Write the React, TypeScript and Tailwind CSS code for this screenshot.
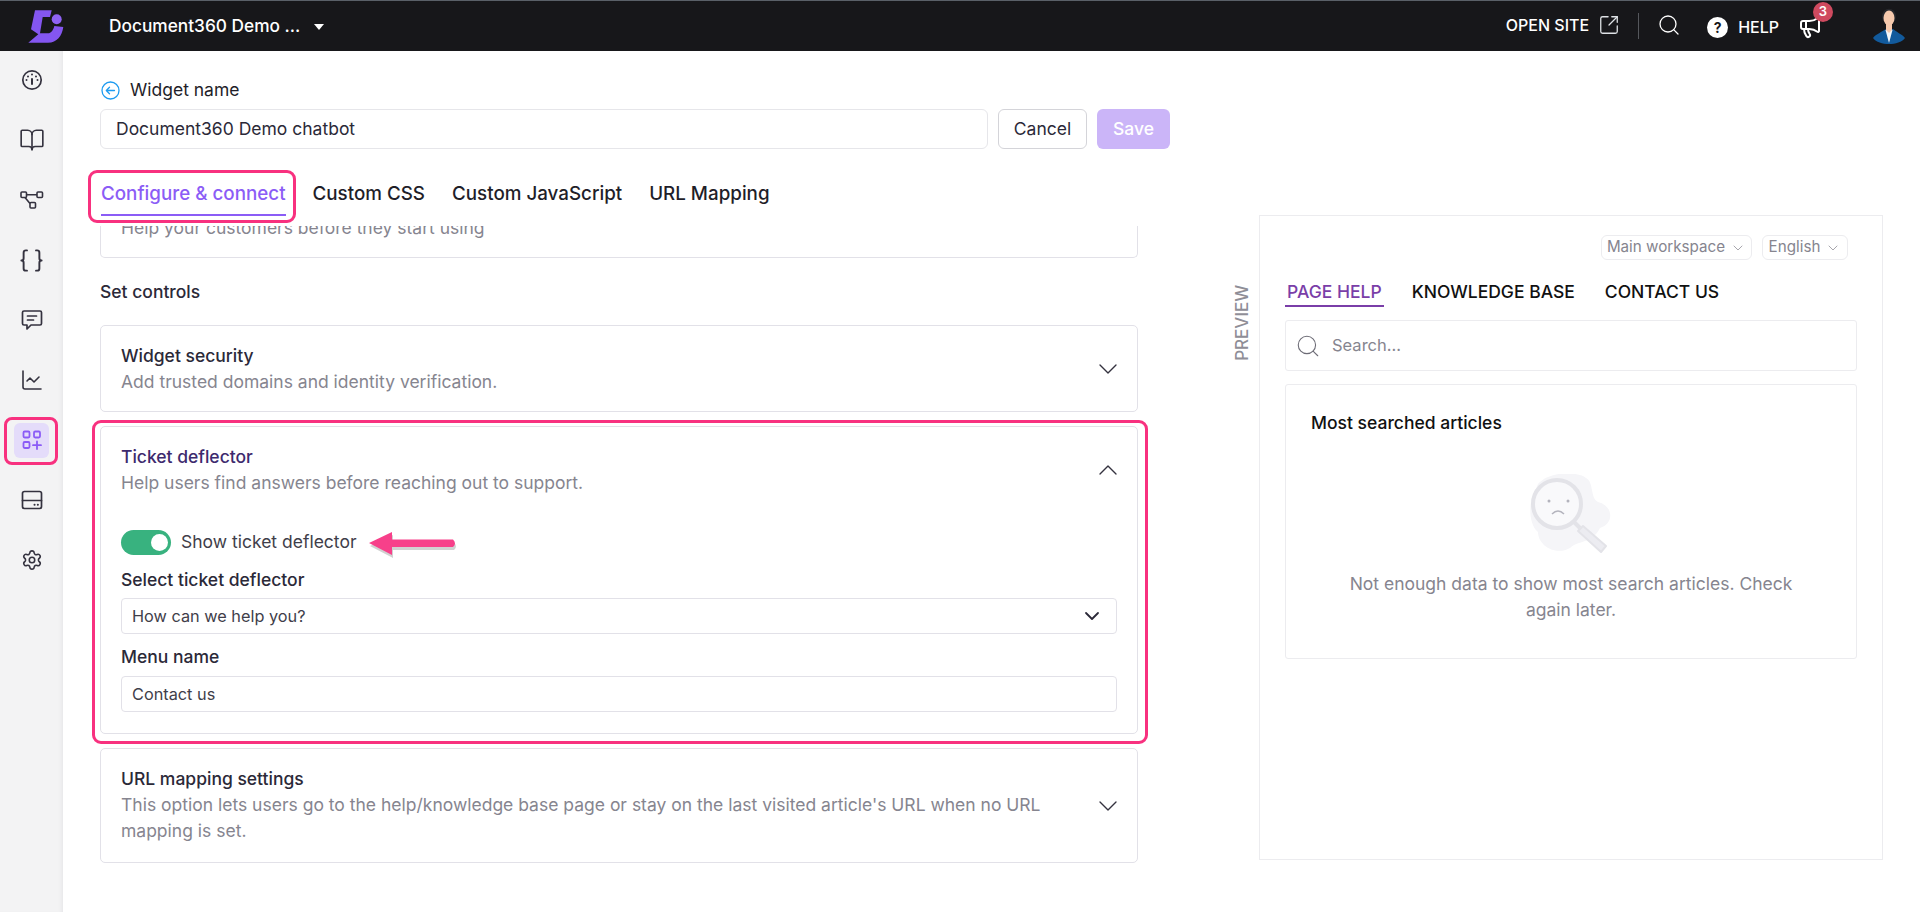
import React from 'react';
import { BookOpen, Braces, ChartLine, ChevronDown, ChevronUp, Megaphone, Search, Settings, SquareArrowOutUpRight } from 'lucide-react';

function Logo() {
  return (
    <svg width="36" height="35" viewBox="0 0 36 35" fill="none">
      <path d="M7 1.300H23.700L22 8H14.700L12 24.300H20C23 24.300 25.500 21 26.300 17L35.300 18C34 27 29 33.700 20 33.700H0.300L10.300 25.300L3 20.300Z" fill="#8456f0" />
      <circle cx="28.700" cy="10.300" r="5" fill="#8f62f5" />
    </svg>
  );
}

function Avatar() {
  return (
    <svg width="34" height="36" viewBox="0 0 34 36">
      <path d="M0 30 C3 26 9 24 13 21 L20 21 C23 24 29 26 32 30 C26 38 6 38 0 30 Z" fill="#125a9c" />
      <path d="M12.500 22 L16 35 L19.500 22 Z" fill="#f4f7fa" />
      <path d="M9 9 C9 -2 23 -2 23 9 L22 13 L10 13 Z" fill="#26272c" />
      <ellipse cx="16" cy="10" rx="5.500" ry="7.500" fill="#f6c9ad" />
      <path d="M13 15h6v7l-3 3-3-3z" fill="#f6c9ad" />
    </svg>
  );
}

function DashIcon() {
  return (
    <svg width="22" height="22" viewBox="0 0 22 22" fill="none" stroke="#34323f" strokeWidth="1.700" strokeLinecap="round">
      <circle cx="11" cy="11" r="9.200" />
      <path d="M11 10V15" strokeWidth="2" />
      <path d="M11 5.500v.1M7 7.400v.1M15 7.400v.1M5.500 11v.1M16.500 11v.1" strokeWidth="2" />
    </svg>
  );
}

function TreeIcon() {
  return (
    <svg width="24" height="20" viewBox="0 0 24 20" fill="none" stroke="#34323f" strokeWidth="1.600">
      <rect x="1" y="2" width="5.500" height="5.500" rx="1" />
      <rect x="17" y="2" width="5.500" height="5.500" rx="1" />
      <rect x="10" y="12.500" width="5.500" height="5.500" rx="1" />
      <path d="M6.500 4.700H17M5 7.500L10 13.500" />
    </svg>
  );
}

function ChatIcon() {
  return (
    <svg width="22" height="22" viewBox="0 0 22 22" fill="none" stroke="#34323f" strokeWidth="1.700" strokeLinecap="round" strokeLinejoin="round">
      <path d="M3 2h16a1.500 1.500 0 0 1 1.500 1.500v11a1.500 1.500 0 0 1-1.500 1.500h-9l-4 4v-4H3a1.500 1.500 0 0 1-1.500-1.500v-11A1.500 1.500 0 0 1 3 2z" />
      <path d="M6.500 7h9M6.500 11h6" />
    </svg>
  );
}

function WidgetsIcon() {
  return (
    <svg width="20" height="20" viewBox="0 0 20 20" fill="none" stroke="#8b5cf6" strokeWidth="1.800" strokeLinecap="round">
      <rect x="1.500" y="1.500" width="6" height="6" rx="1.200" />
      <rect x="12" y="1.500" width="6" height="6" rx="1.200" />
      <rect x="1.500" y="12" width="6" height="6" rx="1.200" />
      <path d="M15 11.500v7.500M11 15.200h8" />
    </svg>
  );
}

function StorageIcon() {
  return (
    <svg width="22" height="20" viewBox="0 0 22 20" fill="none" stroke="#34323f" strokeWidth="1.700" strokeLinecap="round">
      <rect x="1.500" y="1.500" width="19" height="17" rx="2" />
      <path d="M1.500 10.500h19" />
      <path d="M13.500 14.800h.1M16.800 14.800h.1" strokeWidth="2" />
    </svg>
  );
}

function NavItem({ children, className = '' }: { children: React.ReactNode; className?: string }) {
  return <div className={`flex h-[60px] w-full items-center justify-center ${className}`}>{children}</div>;
}

function Sidebar() {
  return (
    <aside className="flex w-[63px] shrink-0 flex-col items-center bg-[#f3f3f4] shadow-[inset_-4px_0_4px_-3px_#e4e4e6]">
      <div className="mt-[-1px] w-full">
        <NavItem><DashIcon /></NavItem>
        <NavItem><BookOpen size={26} strokeWidth={1.500} color="#34323f" /></NavItem>
        <NavItem><TreeIcon /></NavItem>
        <NavItem><Braces size={27} strokeWidth={1.700} color="#34323f" /></NavItem>
        <NavItem><ChatIcon /></NavItem>
        <NavItem><ChartLine size={24} strokeWidth={1.600} color="#34323f" /></NavItem>
        <NavItem className="relative">
          <div className="flex h-[35px] w-[35px] items-center justify-center rounded-[6px] bg-[#e4dcfa]">
            <WidgetsIcon />
          </div>
          <div className="absolute left-[4px] top-[7px] h-[48px] w-[54px] rounded-[8px] border-[3px] border-[#f8317f]" />
        </NavItem>
        <NavItem><StorageIcon /></NavItem>
        <NavItem><Settings size={22} strokeWidth={1.700} color="#34323f" /></NavItem>
      </div>
    </aside>
  );
}

function TopBar() {
  return (
    <header className="flex h-[51px] shrink-0 items-center border-t border-[#5a6068] bg-[#17171a] text-white">
      <div className="ml-[28px] flex w-[81px]"><Logo /></div>
      <span className="text-[17.300px] font-medium">Document360 Demo ...</span>
      <span className="ml-[14px] mt-[2px] h-0 w-0 border-x-[5px] border-t-[6px] border-x-transparent border-t-white" />
      <div className="ml-auto flex items-center">
        <span className="mt-[-2px] text-[16px] font-medium">OPEN SITE</span>
        <SquareArrowOutUpRight size={22} strokeWidth={1.400} className="ml-[9px] mt-[-2px]" color="#dfe2e6" />
        <div className="ml-[18px] h-[26px] w-px bg-[#55575c]" />
        <Search size={24} strokeWidth={1.300} className="ml-[18px] mt-[-2px]" />
        <span className="ml-[26px] mt-[2px] flex h-[21px] w-[21px] items-center justify-center rounded-full bg-white text-[14px] font-bold text-[#17171a]">?</span>
        <span className="ml-[10px] mt-[2px] text-[16px] font-medium">HELP</span>
        <div className="relative ml-[19px] mt-[2px]">
          <Megaphone size={24} strokeWidth={2} />
          <span className="absolute left-[15px] top-[-13px] flex h-[20px] w-[20px] items-center justify-center rounded-full bg-[#cf4a5f] text-[13px] font-semibold">3</span>
        </div>
        <div className="ml-[51px] mr-[13px]"><Avatar /></div>
      </div>
    </header>
  );
}

function Card({ title, desc, open, children, titleColor = 'text-[#2b2938]', pad = 'pb-[16px]' }: { title: string; desc: string; open?: boolean; children?: React.ReactNode; titleColor?: string; pad?: string }) {
  return (
    <div className="rounded-[5px] border border-[#e2e1e8] bg-white px-[20px]">
      <div className="flex items-center justify-between">
        <div className={`pt-[17px] ${pad}`}>
          <div className={`text-[17.500px] font-medium leading-[26px] ${titleColor}`}>{title}</div>
          <div className="max-w-[960px] text-[17.500px] leading-[26px] text-[#86858f]">{desc}</div>
        </div>
        {open ? (
          <ChevronUp size={32} strokeWidth={1} color="#34323f" className="mr-[-7px]" />
        ) : (
          <ChevronDown size={32} strokeWidth={1} color="#34323f" className="mr-[-7px]" />
        )}
      </div>
      {children}
    </div>
  );
}

function DeflectorBody() {
  return (
    <div className="mt-[18px] pb-[21px]">
      <div className="flex h-[25px] items-center">
        <div className="flex h-[25px] w-[50px] items-center justify-end rounded-full bg-[#38b27f] pr-[3px]">
          <div className="h-[17px] w-[17px] rounded-full bg-white" />
        </div>
        <span className="ml-[10px] text-[17.500px] text-[#3f3e4a]">Show ticket deflector</span>
        <svg className="ml-[11px] mt-[8px]" width="92" height="32" viewBox="0 0 92 32">
          <path d="M1 12 L24 1 L24 8.500 L85 8.500 Q89 12.500 85 16 L24 16 L24 24 Z" fill="#000" opacity="0.18" transform="translate(1 3)" />
          <path d="M1 12 L24 1 L24 8.500 L85 8.500 Q89 12.500 85 16 L24 16 L24 24 Z" fill="#f7408a" />
        </svg>
      </div>
      <div className="mt-[12px] text-[17.500px] font-medium leading-[26px] text-[#2b2938]">Select ticket deflector</div>
      <div className="mt-[5px] flex h-[36px] items-center justify-between rounded-[4px] border border-[#e2e1e8] pl-[10px] pr-[12px] text-[16.300px] text-[#3f3e4a]">
        How can we help you?
        <ChevronDown size={24} strokeWidth={1.800} color="#2b2938" />
      </div>
      <div className="mt-[10px] text-[17.500px] font-medium leading-[26px] text-[#2b2938]">Menu name</div>
      <div className="mt-[6px] flex h-[36px] items-center rounded-[4px] border border-[#e2e1e8] pl-[10px] text-[16.300px] text-[#3f3e4a]">Contact us</div>
    </div>
  );
}

function ConfigColumn() {
  return (
    <section className="ml-[37px] w-[1038px] shrink-0 pt-[27px]">
      <div className="flex items-center gap-[10px] pl-[1px] text-[17.500px] leading-[24px] text-[#1f1e29]">
        <svg width="19" height="19" viewBox="0 0 19 19" fill="none" stroke="#1d9bf0" strokeWidth="1.300" strokeLinecap="round" strokeLinejoin="round">
          <circle cx="9.500" cy="9.500" r="8.500" />
          <path d="M13.500 9.500H5.500M8.500 6.200L5.300 9.500L8.500 12.800" />
        </svg>
        Widget name
      </div>
      <div className="mt-[7px] flex w-[1070px] gap-[10px]">
        <div className="flex h-[40px] w-[888px] items-center rounded-[6px] border border-[#e6e6ea] pl-[15px] text-[17.500px] text-[#2b2938]">Document360 Demo chatbot</div>
        <div className="flex h-[40px] w-[89px] items-center justify-center rounded-[6px] border border-[#d4d4d9] text-[17.500px] text-[#2b2938]">Cancel</div>
        <div className="flex h-[40px] w-[73px] items-center justify-center rounded-[6px] bg-[#cbb5f8] text-[17.500px] font-medium text-white">Save</div>
      </div>
      <div className="relative mt-[21px] flex h-[56px] gap-[27px] pl-[1px] text-[18.800px] font-medium leading-[24px] text-[#1f1e29]">
        <div className="relative h-[46px] pt-[12px] text-[#8b5cf6]">
          Configure &amp; connect
          <div className="absolute bottom-0 left-0 right-0 h-[2px] bg-[#8b5cf6]" />
        </div>
        <div className="pt-[12px]">Custom CSS</div>
        <div className="pt-[12px]">Custom JavaScript</div>
        <div className="pt-[12px]">URL Mapping</div>
        <div className="absolute left-[-12px] top-0 h-[53px] w-[208px] rounded-[9px] border-[3px] border-[#f8317f]" />
      </div>
      <div className="h-[32px] overflow-hidden rounded-b-[5px] border-x border-b border-[#e2e1e8] pl-[20px] text-[17.500px] leading-[26px] text-[#86858f]">
        <div className="mt-[-11px]">Help your customers before they start using</div>
      </div>
      <div className="mt-[21px] text-[17.500px] font-medium leading-[26px] text-[#2b2938]">Set controls</div>
      <div className="mt-[20px]">
        <Card title="Widget security" desc="Add trusted domains and identity verification." />
      </div>
      <div className="relative mt-[14px]">
        <Card title="Ticket deflector" desc="Help users find answers before reaching out to support." open titleColor="text-[#3d2a6e]">
          <DeflectorBody />
        </Card>
        <div className="absolute bottom-[-10px] left-[-8px] right-[-10px] top-[-6px] rounded-[9px] border-[3px] border-[#f8317f]" />
      </div>
      <div className="mt-[14px]">
        <Card title="URL mapping settings" desc="This option lets users go to the help/knowledge base page or stay on the last visited article's URL when no URL mapping is set." pad="pb-[18px]" />
      </div>
    </section>
  );
}

function EmptyGlass() {
  return (
    <svg width="82" height="80" viewBox="0 0 82 80" fill="none">
      <path d="M8 10 C20 -4 50 -2 56 4 C64 8 60 24 68 28 C84 32 84 50 70 54 C62 70 48 66 40 74 C26 82 8 72 8 58 C-2 50 0 30 2 24 Z" fill="#f5f5f8" />
      <circle cx="27" cy="30" r="24" fill="#f9f9fb" stroke="#e3e3e8" strokeWidth="4" />
      <circle cx="19" cy="27" r="1.500" fill="#b3b3bd" />
      <circle cx="38" cy="27" r="1.500" fill="#b3b3bd" />
      <path d="M22 40 Q28 34 34 40" stroke="#b3b3bd" strokeWidth="1.500" />
      <path d="M44 48 L50 54" stroke="#e3e3e8" strokeWidth="4" />
      <path d="M48 57 L53 52 L76 72 L71 78 Z" fill="#ececf1" stroke="#e3e3e8" strokeWidth="2" strokeLinejoin="round" />
    </svg>
  );
}

function Preview() {
  return (
    <section className="ml-[94px] flex pt-[164px]">
      <div className="mr-[5px] mt-[68px] flex h-[80px] w-[22px] items-center justify-center">
        <span className="-rotate-90 text-[17px] font-medium text-[#8f8e97]">PREVIEW</span>
      </div>
      <div className="h-[645px] w-[624px] border border-[#ececef] px-[25px] pt-[19px]">
        <div className="flex justify-end gap-[10px] pr-[9px] text-[15.200px] text-[#86858f]">
          <span className="flex h-[25px] w-[151px] items-center justify-center gap-[5px] rounded-[6px] border border-[#ececef]">Main workspace <ChevronDown size={16} strokeWidth={1.100} /></span>
          <span className="flex h-[25px] w-[86px] items-center justify-center gap-[5px] rounded-[6px] border border-[#ececef]">English <ChevronDown size={16} strokeWidth={1.100} /></span>
        </div>
        <div className="mt-[19px] flex gap-[30px] text-[17.500px] font-medium leading-[26px] text-[#111]">
          <div className="mr-[-2px] border-b-2 border-[#7a3ea8] px-[2px] text-[#7a3ea8]">PAGE HELP</div>
          <div>KNOWLEDGE BASE</div>
          <div>CONTACT US</div>
        </div>
        <div className="mt-[13px] flex h-[51px] items-center gap-[11px] rounded-[3px] border border-[#ececef] pl-[9px] text-[16.500px] text-[#86858f]">
          <Search size={26} strokeWidth={1} color="#6d6c76" />
          Search...
        </div>
        <div className="mt-[13px] h-[275px] rounded-[3px] border border-[#ececef] px-[25px] pt-[25px]">
          <div className="text-[17.500px] font-medium leading-[26px] text-[#111]">Most searched articles</div>
          <div className="mt-[38px] flex justify-center"><EmptyGlass /></div>
          <p className="mx-auto mt-[17px] w-[470px] text-center text-[17.500px] leading-[26px] text-[#86858f]">Not enough data to show most search articles. Check again later.</p>
        </div>
      </div>
    </section>
  );
}

export default function App() {
  return (
    <div className="flex h-[912px] w-[1920px] flex-col overflow-hidden bg-white font-['Inter',sans-serif]">
      <TopBar />
      <div className="flex min-h-0 flex-1">
        <Sidebar />
        <ConfigColumn />
        <Preview />
      </div>
    </div>
  );
}
